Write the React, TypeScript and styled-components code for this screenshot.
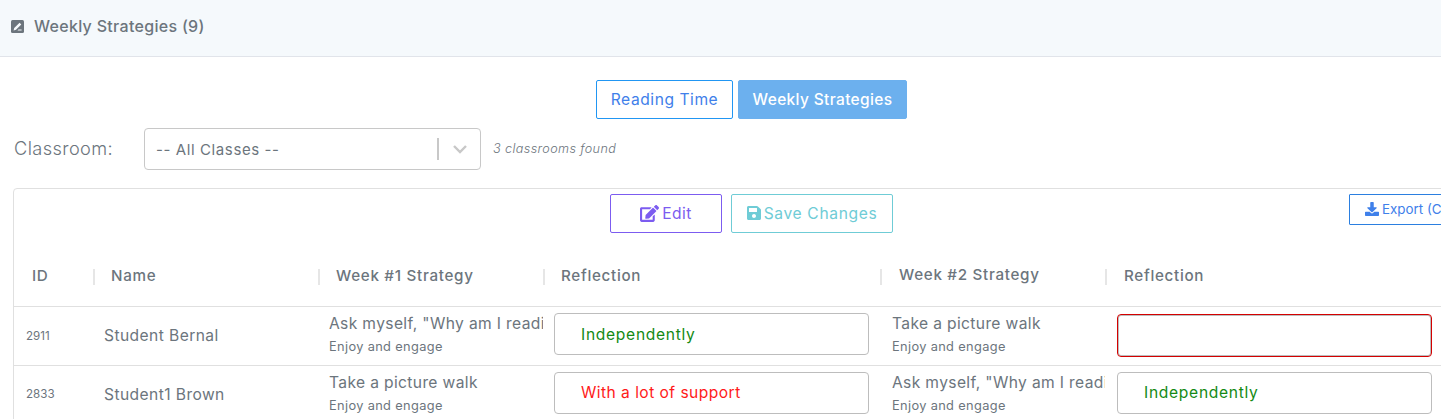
import React from "react";
import styled, { createGlobalStyle } from "styled-components";

const Global = createGlobalStyle`
  html, body { margin: 0; padding: 0; background: #fff; overflow: hidden; }
  body { width: 1441px; height: 419px; font-family: Inter, "Liberation Sans", sans-serif; color: #6c757d; }
  * { box-sizing: border-box; }
`;

const Page = styled.div`
  width: 1441px;
  height: 419px;
  overflow: hidden;
`;

const Header = styled.header`
  height: 57px;
  background: #f5f9fc;
  border-bottom: 1px solid #e1e4ea;
  display: flex;
  align-items: center;
  padding: 0 0 4px 11px;
  gap: 10px;
  font-size: 16px;
  letter-spacing: 0.3px;
  font-weight: 500;
  color: #6c757d;
`;

const Tabs = styled.div`
  display: flex;
  justify-content: center;
  gap: 5px;
  margin-top: 23px;
  padding-left: 62px;
`;

const Tab = styled.div<{ $active?: boolean }>`
  height: 39px;
  display: flex;
  align-items: center;
  justify-content: center;
  width: ${(p) => (p.$active ? "169px" : "137px")};
  border-radius: 2px;
  font-size: ${(p) => (p.$active ? "15.5px" : "15.6px")};
  letter-spacing: ${(p) => (p.$active ? "0.35px" : "0.55px")};
  font-weight: ${(p) => (p.$active ? 500 : 400)};
  border: 1px solid ${(p) => (p.$active ? "#6cb0ee" : "#2196f3")};
  background: ${(p) => (p.$active ? "#6cb0ee" : "#fff")};
  color: ${(p) => (p.$active ? "#fff" : "#3f80ea")};
`;

const ClassRow = styled.div`
  display: flex;
  align-items: center;
  margin: 9px 0 0 13px;
  height: 42px;
`;

const ClassLabel = styled.label`
  width: 131px;
  padding: 0 0 2px 1px;
  font-size: 18.2px;
  letter-spacing: 0.4px;
  font-weight: 300;
  color: #6c757d;
`;

const Select = styled.div`
  width: 337px;
  height: 42px;
  border: 1px solid #c8c8c8;
  border-radius: 4px;
  display: flex;
  align-items: center;
  padding-left: 11px;
  font-size: 15px;
  letter-spacing: 0.6px;
  color: #6c757d;
`;

const SelectValue = styled.span`
  flex: 1;
`;

const SelectSep = styled.span`
  width: 2px;
  height: 22px;
  background: #c8c8c8;
`;

const Chevron = styled.span`
  width: 41px;
  display: flex;
  justify-content: center;
  color: #c8c8c8;
`;

const Found = styled.span`
  margin-left: 12px;
  padding-bottom: 2px;
  font-size: 12.6px;
  letter-spacing: 0.4px;
  font-style: italic;
  font-weight: 300;
  color: #6c757d;
`;

const Card = styled.section`
  margin: 18px 0 0 13px;
  width: 1460px;
  border: 1px solid #e0e0e0;
  border-radius: 4px 0 0 0;
`;

const Toolbar = styled.div`
  display: flex;
  align-items: flex-start;
  padding: 5px 0 0 596px;
  height: 60px;
`;

const ActionButton = styled.div<{ $color: string; $width: number; $ml?: number; $spacing: number }>`
  width: ${(p) => p.$width}px;
  height: 39px;
  margin-left: ${(p) => p.$ml ?? 0}px;
  display: flex;
  align-items: center;
  justify-content: center;
  gap: 3px;
  flex: none;
  border: 1px solid ${(p) => p.$color};
  border-radius: 2px;
  color: ${(p) => p.$color};
  font-size: 15.6px;
  letter-spacing: ${(p) => p.$spacing}px;
  padding-bottom: 1px;
`;

const ExportButton = styled.div`
  width: 120px;
  height: 31px;
  margin-left: 456px;
  display: flex;
  align-items: center;
  gap: 3px;
  padding: 0 0 2px 15px;
  flex: none;
  white-space: nowrap;
  border: 1px solid #2b7fe0;
  border-radius: 1px;
  color: #3f80ea;
  font-size: 13.4px;
`;

const Table = styled.div`
  display: grid;
  grid-template-columns: 79px 225px 225px 337px 225px 337px;
`;

const Th = styled.div<{ $lift?: boolean; $second?: boolean }>`
  height: 58px;
  display: flex;
  align-items: center;
  padding: 0 0 ${(p) => (p.$lift ? "6px" : "5px")} ${(p) => (p.$second ? "19px" : "18px")};
  font-size: 15.2px;
  letter-spacing: 0.7px;
  font-weight: 500;
  color: #6c757d;
  border-bottom: 1px solid #e0e0e0;
  position: relative;
  &:not(:first-child)::before {
    content: "";
    position: absolute;
    left: 0;
    top: 20px;
    width: 2px;
    height: 16px;
    background: #e6e6e6;
  }
`;

const Td = styled.div`
  height: 58.5px;
  border-bottom: 1px solid #e0e0e0;
  display: flex;
  align-items: center;
  min-width: 0;
`;

const IdCell = styled(Td)`
  padding-left: 12px;
  font-size: 11.6px;
  color: #6c757d;
`;

const NameCell = styled(Td)`
  padding-left: 11px;
  font-size: 15.6px;
  letter-spacing: 0.42px;
  color: #6c757d;
`;

const StrategyCell = styled(Td)<{ $second?: boolean }>`
  flex-direction: column;
  align-items: flex-start;
  justify-content: flex-start;
  padding: 7px 0 0 ${(p) => (p.$second ? "12px" : "11px")};
  overflow: hidden;
`;

const StrategyTitle = styled.div`
  width: 214px;
  overflow: hidden;
  white-space: nowrap;
  font-size: 15.6px;
  letter-spacing: 0.36px;
  line-height: 20px;
  color: #6c757d;
`;

const StrategySub = styled.div`
  margin-top: 5px;
  font-size: 12.8px;
  letter-spacing: 0.35px;
  line-height: 16px;
  color: #6c757d;
`;

const ReflectionCell = styled(Td)<{ $second?: boolean }>`
  padding-left: ${(p) => (p.$second ? "12px" : "11px")};
`;

const ReflectionBox = styled.div<{ $tone: "green" | "red" | "empty" }>`
  width: 315px;
  height: ${(p) => (p.$tone === "empty" ? "43px" : "42px")};
  margin-top: ${(p) => (p.$tone === "empty" ? "-1px" : "-3px")};
  display: flex;
  align-items: center;
  padding-left: 26px;
  font-size: 15.6px;
  letter-spacing: ${(p) => (p.$tone === "red" ? "0.45px" : "0.7px")};
  border: 1px solid ${(p) => (p.$tone === "empty" ? "#d40000" : "#bdbdbd")};
  border-radius: 4px;
  color: ${(p) => (p.$tone === "green" ? "#148a14" : "#ff1a1a")};
  box-shadow: ${(p) => (p.$tone === "empty" ? "inset 0 0 0 1px #bdbdbd" : "none")};
  background: #fff;
`;

const Pen = () => (
  <svg width="13" height="13" viewBox="0 0 13 13">
    <rect width="13" height="13" rx="1.5" fill="#6c757d" />
    <path d="M2.6 10.4 L3.2 8 L8.6 2.7 L10.3 4.4 L5 9.8 Z M6.5 10.4 H10.6 V9.4 H7.4 Z" fill="#f5f9fc" />
  </svg>
);

const ChevronIcon = () => (
  <svg width="16" height="10" viewBox="0 0 16 10" fill="none" stroke="currentColor" strokeWidth="2.4">
    <path d="M2 2 L8 8 L14 2" />
  </svg>
);

const EditIcon = () => (
  <svg width="19" height="17" viewBox="0 0 576 512" fill="currentColor">
    <path d="M402.6 83.2l90.2 90.2c3.8 3.8 3.8 10 0 13.8L274.4 405.6l-92.8 10.3c-12.4 1.4-22.9-9.1-21.5-21.5l10.3-92.8L388.8 83.2c3.8-3.8 10-3.8 13.8 0zm162-22.9l-48.8-48.8c-15.2-15.2-39.9-15.2-55.2 0l-35.4 35.4c-3.8 3.8-3.8 10 0 13.8l90.2 90.2c3.8 3.8 10 3.8 13.8 0l35.4-35.4c15.2-15.3 15.2-40 0-55.2zM384 346.2V448H64V128h229.8c3.2 0 6.2-1.3 8.5-3.5l40-40c7.6-7.6 2.2-20.5-8.5-20.5H48C21.5 64 0 85.5 0 112v352c0 26.5 21.5 48 48 48h352c26.5 0 48-21.5 48-48V306.2c0-10.7-12.9-16-20.5-8.5l-40 40c-2.2 2.3-3.5 5.3-3.5 8.5z" />
  </svg>
);

const SaveIcon = () => (
  <svg width="14" height="16" viewBox="0 0 448 512" fill="currentColor">
    <path d="M433.9 129.9l-83.9-83.9A48 48 0 0 0 316.1 32H48C21.5 32 0 53.5 0 80v352c0 26.5 21.5 48 48 48h352c26.5 0 48-21.5 48-48V163.9a48 48 0 0 0-14.1-34zM224 416c-35.3 0-64-28.7-64-64 0-35.3 28.7-64 64-64s64 28.7 64 64c0 35.3-28.7 64-64 64zm96-304.5V212c0 6.6-5.4 12-12 12H76c-6.6 0-12-5.4-12-12V108c0-6.6 5.4-12 12-12h228.5c3.2 0 6.2 1.3 8.5 3.5l3.5 3.5A12 12 0 0 1 320 111.5z" />
  </svg>
);

const DownloadIcon = () => (
  <svg width="14" height="14" viewBox="0 0 512 512" fill="currentColor">
    <path d="M216 0h80c13.3 0 24 10.7 24 24v168h87.7c17.8 0 26.7 21.5 14.1 34.1L269.7 378.3c-7.5 7.5-19.8 7.5-27.3 0L90.1 226.1c-12.6-12.6-3.7-34.1 14.1-34.1H192V24c0-13.3 10.7-24 24-24zm296 376v112c0 13.3-10.7 24-24 24H24c-13.3 0-24-10.7-24-24V376c0-13.3 10.7-24 24-24h146.7l49 49c20.1 20.1 52.5 20.1 72.6 0l49-49H488c13.3 0 24 10.7 24 24z" />
  </svg>
);

const rows = [
  { id: "2911", name: "Student Bernal", w1: 'Ask myself, "Why am I reading this?"', r1: { t: "Independently", c: "green" as const }, w2: "Take a picture walk", r2: { t: "", c: "empty" as const } },
  { id: "2833", name: "Student1 Brown", w1: "Take a picture walk", r1: { t: "With a lot of support", c: "red" as const }, w2: 'Ask myself, "Why am I reading this?"', r2: { t: "Independently", c: "green" as const } },
];

export default function App() {
  return (
    <Page>
      <Global />
      <Header><Pen />Weekly Strategies (9)</Header>
      <Tabs>
        <Tab>Reading Time</Tab>
        <Tab $active>Weekly Strategies</Tab>
      </Tabs>
      <ClassRow>
        <ClassLabel>Classroom:</ClassLabel>
        <Select>
          <SelectValue>-- All Classes --</SelectValue>
          <SelectSep />
          <Chevron><ChevronIcon /></Chevron>
        </Select>
        <Found>3 classrooms found</Found>
      </ClassRow>
      <Card>
        <Toolbar>
          <ActionButton $color="#7c5cf0" $width={112} $spacing={0.4}><EditIcon />Edit</ActionButton>
          <ActionButton $color="#6fccd6" $width={162} $ml={9} $spacing={0.65}><SaveIcon />Save Changes</ActionButton>
          <ExportButton><DownloadIcon />Export (CSV)</ExportButton>
        </Toolbar>
        <Table>
          <Th>ID</Th>
          <Th>Name</Th>
          <Th>Week #1 Strategy</Th>
          <Th>Reflection</Th>
          <Th $lift $second>Week #2 Strategy</Th>
          <Th $second>Reflection</Th>
          {rows.map((r) => (
            <React.Fragment key={r.id}>
              <IdCell>{r.id}</IdCell>
              <NameCell>{r.name}</NameCell>
              <StrategyCell>
                <StrategyTitle>{r.w1}</StrategyTitle>
                <StrategySub>Enjoy and engage</StrategySub>
              </StrategyCell>
              <ReflectionCell><ReflectionBox $tone={r.r1.c}>{r.r1.t}</ReflectionBox></ReflectionCell>
              <StrategyCell $second>
                <StrategyTitle>{r.w2}</StrategyTitle>
                <StrategySub>Enjoy and engage</StrategySub>
              </StrategyCell>
              <ReflectionCell $second><ReflectionBox $tone={r.r2.c}>{r.r2.t}</ReflectionBox></ReflectionCell>
            </React.Fragment>
          ))}
        </Table>
      </Card>
    </Page>
  );
}
